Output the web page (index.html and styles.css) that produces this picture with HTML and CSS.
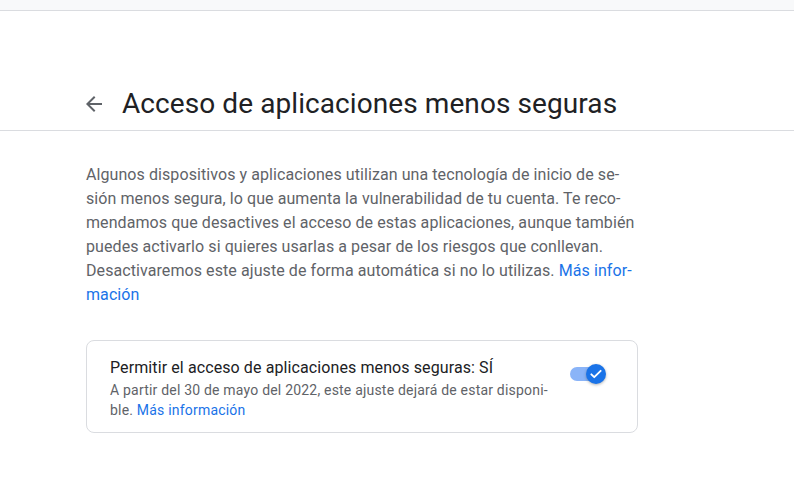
FILE: index.html
```html
<!DOCTYPE html>
<html lang="es">
<head>
<meta charset="utf-8">
<link rel="stylesheet" href="styles.css">
</head>
<body>
<div class="topbar"></div>
<header class="header">
  <svg class="back" viewBox="0 0 24 24" width="24" height="24"><path d="M20 11H7.83l5.59-5.59L12 4l-8 8 8 8 1.41-1.41L7.83 13H20v-2z" fill="#5f6368"/></svg>
  <h1 class="title">Acceso de aplicaciones menos seguras</h1>
</header>
<main class="content">
  <p class="intro">Algunos dispositivos y aplicaciones utilizan una tecnología de inicio de se&shy;sión menos segura, lo que aumenta la vulnerabilidad de tu cuenta. Te reco&shy;mendamos que desactives el acceso de estas aplicaciones, aunque también puedes activarlo si quieres usarlas a pesar de los riesgos que conllevan. Desactivaremos este ajuste de forma automática si no lo utilizas. <a class="link" href="#">Más infor&shy;mación</a></p>
  <section class="card">
    <div class="card-text">
      <div class="card-title">Permitir el acceso de aplicaciones menos seguras: SÍ</div>
      <div class="card-sub">A partir del 30 de mayo del 2022, este ajuste dejará de estar disponi&shy;ble. <a class="link" href="#">Más información</a></div>
    </div>
    <div class="toggle">
      <span class="track"></span>
      <span class="knob"><svg viewBox="0 0 24 24" width="14" height="14"><path d="M4 12.5l5 5L20 6.5" fill="none" stroke="#fff" stroke-width="3.2" stroke-linecap="round" stroke-linejoin="round"/></svg></span>
    </div>
  </section>
</main>
</body>
</html>
```
FILE: styles.css
```css
* { box-sizing: border-box; }
body {
  margin: 0;
  background: #fff;
  font-family: Roboto, "Liberation Sans", sans-serif;
}
.topbar {
  height: 11px;
  background: #f8f9fa;
  border-bottom: 1px solid #dadce0;
}
.header {
  display: flex;
  align-items: center;
  gap: 16px;
  padding: 75px 82px 8px;
  border-bottom: 1px solid #dadce0;
}
.back { flex: none; }
.title {
  margin: 0;
  font-size: 28px;
  line-height: 36px;
  font-weight: 400;
  letter-spacing: 0.08px;
  color: #202124;
}
.content {
  width: 552px;
  margin-left: 86px;
  padding-top: 32px;
}
.intro {
  margin: 0;
  font-size: 16px;
  line-height: 24px;
  letter-spacing: 0.08px;
  color: #5f6368;
}
.link {
  color: #1a73e8;
  text-decoration: none;
}
.card {
  margin-top: 33px;
  border: 1px solid #dadce0;
  border-radius: 8px;
  padding: 15px 30px 12px 23px;
  display: flex;
  align-items: flex-start;
}
.card-text {
  width: 444px;
}
.card-title {
  font-size: 16px;
  line-height: 24px;
  letter-spacing: 0.1px;
  color: #202124;
}
.card-sub {
  font-size: 14px;
  line-height: 20px;
  letter-spacing: 0.2px;
  color: #5f6368;
}
.toggle {
  position: relative;
  width: 37px;
  height: 20px;
  margin-left: auto;
  margin-top: 8px;
}
.track {
  position: absolute;
  left: 0;
  top: 3px;
  width: 34px;
  height: 14px;
  border-radius: 7px;
  background: #8ab4f8;
}
.knob {
  position: absolute;
  left: 16px;
  top: 0;
  width: 20px;
  height: 20px;
  border-radius: 50%;
  background: #1a73e8;
  box-shadow: 0 1px 3px rgba(60,64,67,.4);
  display: flex;
  align-items: center;
  justify-content: center;
}
```
